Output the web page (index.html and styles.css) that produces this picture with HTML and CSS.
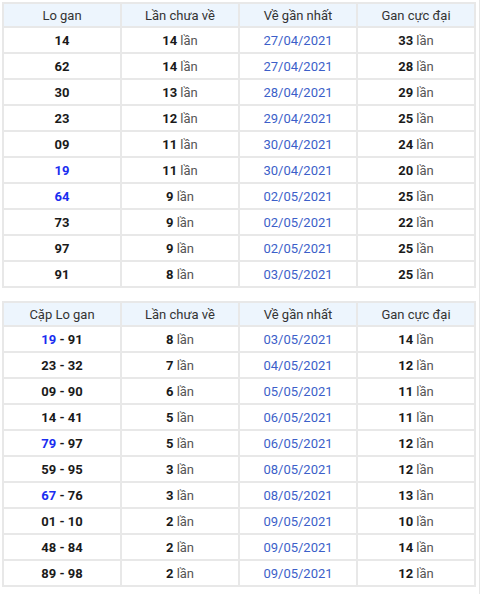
FILE: index.html
```html
<!DOCTYPE html>
<html>
<head>
<meta charset="utf-8">
<link rel="stylesheet" href="styles.css">
</head>
<body>
<div class="wrap">
<table class="gan">
<thead>
<tr><th>Lo gan</th><th>Lần chưa về</th><th>Về gần nhất</th><th>Gan cực đại</th></tr>
</thead>
<tbody>
<tr><td class="num">14</td><td><b>14</b> lần</td><td class="date">27/04/2021</td><td><b>33</b> lần</td></tr>
<tr><td class="num">62</td><td><b>14</b> lần</td><td class="date">27/04/2021</td><td><b>28</b> lần</td></tr>
<tr><td class="num">30</td><td><b>13</b> lần</td><td class="date">28/04/2021</td><td><b>29</b> lần</td></tr>
<tr><td class="num">23</td><td><b>12</b> lần</td><td class="date">29/04/2021</td><td><b>25</b> lần</td></tr>
<tr><td class="num">09</td><td><b>11</b> lần</td><td class="date">30/04/2021</td><td><b>24</b> lần</td></tr>
<tr><td class="num"><span class="hl">19</span></td><td><b>11</b> lần</td><td class="date">30/04/2021</td><td><b>20</b> lần</td></tr>
<tr><td class="num"><span class="hl">64</span></td><td><b>9</b> lần</td><td class="date">02/05/2021</td><td><b>25</b> lần</td></tr>
<tr><td class="num">73</td><td><b>9</b> lần</td><td class="date">02/05/2021</td><td><b>22</b> lần</td></tr>
<tr><td class="num">97</td><td><b>9</b> lần</td><td class="date">02/05/2021</td><td><b>25</b> lần</td></tr>
<tr><td class="num">91</td><td><b>8</b> lần</td><td class="date">03/05/2021</td><td><b>25</b> lần</td></tr>
</tbody>
</table>
<table class="gan">
<thead>
<tr><th>Cặp Lo gan</th><th>Lần chưa về</th><th>Về gần nhất</th><th>Gan cực đại</th></tr>
</thead>
<tbody>
<tr><td class="num"><span class="hl">19</span> - 91</td><td><b>8</b> lần</td><td class="date">03/05/2021</td><td><b>14</b> lần</td></tr>
<tr><td class="num">23 - 32</td><td><b>7</b> lần</td><td class="date">04/05/2021</td><td><b>12</b> lần</td></tr>
<tr><td class="num">09 - 90</td><td><b>6</b> lần</td><td class="date">05/05/2021</td><td><b>11</b> lần</td></tr>
<tr><td class="num">14 - 41</td><td><b>5</b> lần</td><td class="date">06/05/2021</td><td><b>11</b> lần</td></tr>
<tr><td class="num"><span class="hl">79</span> - 97</td><td><b>5</b> lần</td><td class="date">06/05/2021</td><td><b>12</b> lần</td></tr>
<tr><td class="num">59 - 95</td><td><b>3</b> lần</td><td class="date">08/05/2021</td><td><b>12</b> lần</td></tr>
<tr><td class="num"><span class="hl">67</span> - 76</td><td><b>3</b> lần</td><td class="date">08/05/2021</td><td><b>13</b> lần</td></tr>
<tr><td class="num">01 - 10</td><td><b>2</b> lần</td><td class="date">09/05/2021</td><td><b>10</b> lần</td></tr>
<tr><td class="num">48 - 84</td><td><b>2</b> lần</td><td class="date">09/05/2021</td><td><b>14</b> lần</td></tr>
<tr><td class="num">89 - 98</td><td><b>2</b> lần</td><td class="date">09/05/2021</td><td><b>12</b> lần</td></tr>
</tbody>
</table>
</div>
</body>
</html>
```
FILE: styles.css
```css
html, body {
  margin: 0;
  padding: 0;
  background: #fff;
}
body {
  font-family: Roboto, "Liberation Sans", Arial, sans-serif;
  font-size: 13px;
  color: #333;
}
.wrap {
  width: 480px;
  padding: 2px 0 0 2px;
  border-right: 1px solid #e6e6e6;
  box-sizing: border-box;
  height: 594px;
}
.gan {
  width: 474px;
  border-collapse: collapse;
  table-layout: fixed;
  margin-bottom: 13px;
}
.gan th, .gan td {
  border: 2px solid #e8e8e8;
  text-align: center;
  padding: 0;
}
.gan th {
  background: #edf5fd;
  font-weight: normal;
  color: #333;
  height: 22px;
}
.gan td {
  height: 24px;
  color: #555;
}
.gan td b {
  color: #1a1a1a;
}
.gan td.num {
  font-weight: bold;
  color: #1a1a1a;
}
.gan .hl {
  color: #1a2ef0;
}
.gan td.date {
  color: #3c5fc9;
}
```
